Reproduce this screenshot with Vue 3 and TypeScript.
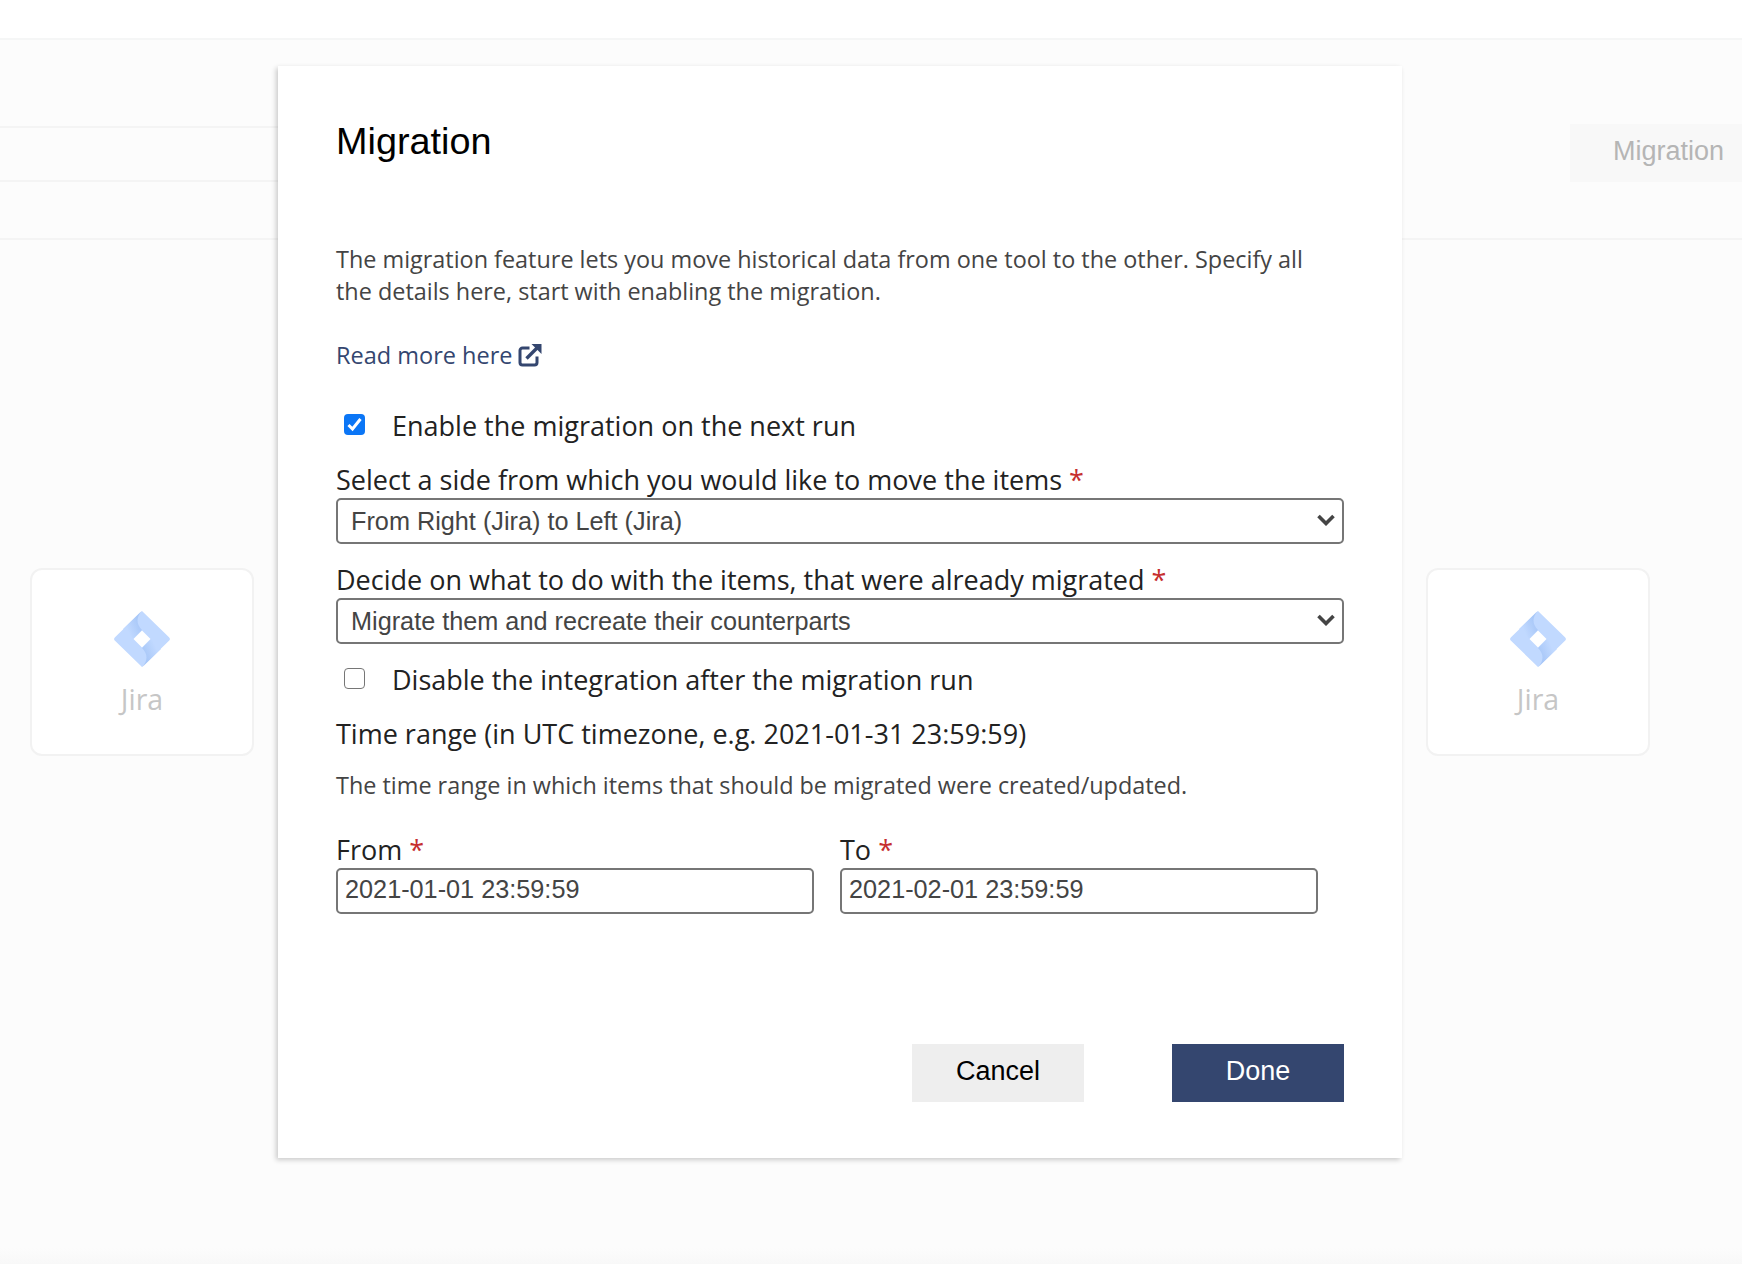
<script setup lang="ts">
import { ref } from 'vue'

const enabled = ref(true)
const disabled = ref(false)
const side = ref('From Right (Jira) to Left (Jira)')
const migrated = ref('Migrate them and recreate their counterparts')
const from = ref('2021-01-01 23:59:59')
const to = ref('2021-02-01 23:59:59')
const sides = ['From Right (Jira) to Left (Jira)', 'From Left (Jira) to Right (Jira)']
const actions = ['Migrate them and recreate their counterparts', 'Skip them']
const cards = ['left', 'right']
</script>

<template>
  <div class="page">
    <header class="topbar"></header>
    <div class="toolbar">
      <div class="rows">
        <div class="row r1"></div>
        <div class="row r2"></div>
        <div class="row r3"></div>
      </div>
      <div class="tab">Migration</div>
    </div>
    <main class="canvas">
      <div v-for="c in cards" :key="c" class="card">
        <svg class="jira" viewBox="0 0 56 56" width="56" height="56">
          <defs>
            <linearGradient :id="'g1' + c" x1="0.75" y1="0.25" x2="0.2" y2="0.6">
              <stop offset="0" stop-color="#a9c8f8" />
              <stop offset="1" stop-color="#c1d9ff" />
            </linearGradient>
            <linearGradient :id="'g2' + c" x1="0.25" y1="0.75" x2="0.8" y2="0.4">
              <stop offset="0" stop-color="#a9c8f8" />
              <stop offset="1" stop-color="#c1d9ff" />
            </linearGradient>
          </defs>
          <path d="M28 0 55 26.2a2.5 2.5 0 0 1 0 3.6L28 56 1 29.800a2.500 2.500 0 0 1 0-3.600Z" fill="#c1d9ff" />
          <path d="M28 0C22 6 22 13 28 19L19 28 9 18 26 1.500Z" :fill="'url(#g1' + c + ')'" />
          <path d="M28 56C34 50 34 43 28 37L37 28 47 38 30 54.500Z" :fill="'url(#g2' + c + ')'" />
          <path d="M28 19.500 36.500 28 28 36.500 19.500 28Z" fill="#fff" />
        </svg>
        <span class="card-name">Jira</span>
      </div>
    </main>

    <section class="modal">
      <h2 class="title">Migration</h2>
      <p class="desc">The migration feature lets you move historical data from one tool to the other. Specify all the details here, start with enabling the migration.</p>
      <a class="link" href="#">Read more here
        <svg class="ext" viewBox="0 0 24 24" width="24" height="24">
          <path d="M19 13.500V19.500a2.500 2.500 0 0 1-2.500 2.500H4.500A2.500 2.500 0 0 1 2 19.500V7.500A2.500 2.500 0 0 1 4.500 5h7" fill="none" stroke="#34466f" stroke-width="3" />
          <path d="M8.500 15.500 20 4" fill="none" stroke="#34466f" stroke-width="3.400" />
          <path d="M13.500 1H23.500V11Z" fill="#34466f" />
        </svg>
      </a>

      <label class="check first"><input v-model="enabled" type="checkbox" /><span>Enable the migration on the next run</span></label>

      <label class="field f1">
        <span class="label">Select a side from which you would like to move the items <em>*</em></span>
        <span class="select-wrap">
          <select v-model="side"><option v-for="s in sides" :key="s">{{ s }}</option></select>
          <svg class="chev" viewBox="0 0 18 12" width="18" height="12"><path d="M1.500 2 9 9.500 16.500 2" fill="none" stroke="#444" stroke-width="3.600" /></svg>
        </span>
      </label>

      <label class="field f2">
        <span class="label">Decide on what to do with the items, that were already migrated <em>*</em></span>
        <span class="select-wrap">
          <select v-model="migrated"><option v-for="a in actions" :key="a">{{ a }}</option></select>
          <svg class="chev" viewBox="0 0 18 12" width="18" height="12"><path d="M1.500 2 9 9.500 16.500 2" fill="none" stroke="#444" stroke-width="3.600" /></svg>
        </span>
      </label>

      <label class="check second"><input v-model="disabled" type="checkbox" /><span>Disable the integration after the migration run</span></label>

      <div class="range-title">Time range (in UTC timezone, e.g. 2021-01-31 23:59:59)</div>
      <p class="range-desc">The time range in which items that should be migrated were created/updated.</p>

      <div class="dates">
        <label class="date">
          <span class="label">From <em>*</em></span>
          <input v-model="from" type="text" />
        </label>
        <label class="date">
          <span class="label">To <em>*</em></span>
          <input v-model="to" type="text" />
        </label>
      </div>

      <div class="actions">
        <button class="btn cancel" type="button">Cancel</button>
        <button class="btn done" type="button">Done</button>
      </div>
    </section>
  </div>
</template>

<style>
html, body { margin: 0; background: #fcfcfc; }
</style>

<style scoped>
.page {
  position: relative;
  width: 1742px;
  height: 1264px;
  overflow: hidden;
  background: linear-gradient(to bottom, #fcfcfc calc(100% - 16px), #f8f8f8 100%);
  font-family: "Open Sans", sans-serif;
}
.topbar {
  height: 40px;
  background: #fff;
  border-bottom: 2px solid #f5f6f6;
  box-sizing: border-box;
}
.toolbar {
  display: flex;
  justify-content: space-between;
  height: 198px;
  border-bottom: 2px solid #f4f4f4;
}
.rows { width: 600px; }
.row { box-sizing: border-box; border-bottom: 2px solid #f4f4f4; }
.r1 { height: 88px; }
.r2 { height: 54px; }
.r3 { height: 56px; border-bottom: 0; }
.tab {
  align-self: flex-start;
  margin-top: 84px;
  width: 172px;
  height: 58px;
  box-sizing: border-box;
  padding-left: 43px;
  background: #f8f8f8;
  color: #b5b5b5;
  font: 27px/54px "Liberation Sans", sans-serif;
}
.canvas {
  display: flex;
  justify-content: space-between;
  padding: 328px 92px 0 30px;
}
.card {
  width: 224px;
  height: 188px;
  box-sizing: border-box;
  background: #fff;
  border: 2px solid #f2f2f2;
  border-radius: 12px;
  display: flex;
  flex-direction: column;
  align-items: center;
  padding-top: 41px;
}
.jira { display: block; }
.card-name {
  margin-top: 14px;
  font-size: 28.5px;
  line-height: 36px;
  color: #c6c6c6;
}
.modal {
  position: absolute;
  left: 278px;
  top: 66px;
  width: 1124px;
  height: 1092px;
  box-sizing: border-box;
  padding: 53px 58px 0;
  background: #fff;
  box-shadow: -2px 2px 5px rgba(0, 0, 0, 0.2);
}
.title {
  margin: 0;
  font: 400 37.8px/44px "Liberation Sans", sans-serif;
  color: #000;
}
.desc {
  margin: 80px 0 0;
  font-size: 23.42px;
  line-height: 32px;
  color: #444;
}
.link {
  display: flex;
  align-items: center;
  gap: 6px;
  margin-top: 32px;
  font-size: 23.5px;
  line-height: 32px;
  color: #34466f;
  text-decoration: none;
}
.check {
  display: flex;
  align-items: center;
  height: 32px;
  font-size: 27px;
  line-height: 32px;
  color: #222;
}
.check input {
  appearance: none;
  box-sizing: border-box;
  width: 21px;
  height: 21px;
  margin: 0 27px 3px 8px;
  border: 1.5px solid #767676;
  border-radius: 4px;
  background: #fff;
}
.check input:checked {
  border: 0;
  background: #0b76f6 url("data:image/svg+xml,%3Csvg xmlns='http://www.w3.org/2000/svg' viewBox='0 0 21 21'%3E%3Cpath d='M4.500 11l4 4 8-10' fill='none' stroke='%23fff' stroke-width='3'/%3E%3C/svg%3E") center / 21px 21px no-repeat;
}
.first { margin-top: 39px; }
.second { margin-top: 20px; }
.field { display: block; }
.f1 { margin-top: 22px; }
.f2 { margin-top: 20px; }
.label {
  display: block;
  height: 34px;
  font-size: 27px;
  line-height: 32px;
  color: #222;
}
.label em {
  font-style: normal;
  color: #c62f2f;
}
.select-wrap {
  display: block;
  position: relative;
}
select {
  display: block;
  width: 100%;
  height: 46px;
  box-sizing: border-box;
  padding: 0 13px;
  border: 2px solid #767676;
  border-radius: 5px;
  background: #fff;
  appearance: none;
  color: #444;
  font: 25.25px "Liberation Sans", sans-serif;
}
.chev {
  position: absolute;
  right: 9px;
  top: 16px;
  pointer-events: none;
}
.range-title {
  margin-top: 22px;
  font-size: 27px;
  line-height: 32px;
  color: #222;
}
.range-desc {
  margin: 19px 0 0;
  font-size: 23.42px;
  line-height: 32px;
  color: #444;
}
.dates {
  display: flex;
  gap: 26px;
  margin-top: 33px;
}
.date { display: block; width: 478px; }
.date input {
  display: block;
  width: 100%;
  height: 46px;
  box-sizing: border-box;
  padding: 0 7px 3px;
  border: 2px solid #767676;
  border-radius: 5px;
  color: #444;
  font: 25.25px "Liberation Sans", sans-serif;
}
.actions {
  display: flex;
  justify-content: flex-end;
  gap: 88px;
  margin-top: 130px;
}
.btn {
  width: 172px;
  height: 58px;
  border: 0;
  padding: 0 0 4px;
  font: 27px "Liberation Sans", sans-serif;
}
.cancel { background: #eee; color: #000; }
.done { background: #34466f; color: #fff; }
</style>
